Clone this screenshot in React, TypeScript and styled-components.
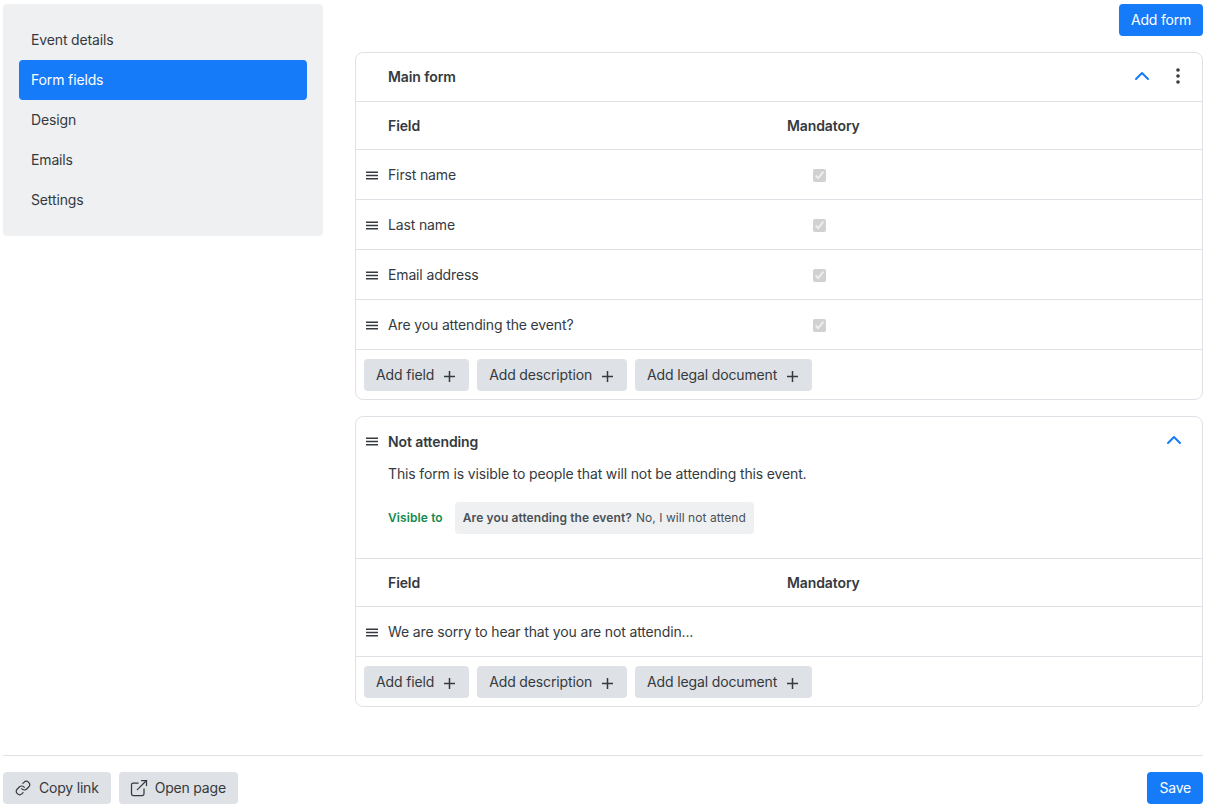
import React from 'react';
import styled, { createGlobalStyle } from 'styled-components';
import { ChevronUp, ExternalLink, Link } from 'lucide-react';

const colors = {
  text: '#343a40',
  muted: '#495057',
  border: '#dee2e6',
  primary: '#167bf9',
  panel: '#eff0f2',
  button: '#dee1e5',
  green: '#148a4f',
};

const GlobalStyle = createGlobalStyle`
  html, body {
    margin: 0;
    background: #fff;
    font-family: Inter, "Liberation Sans", sans-serif;
    font-size: 14px;
    letter-spacing: -0.14px;
    color: ${colors.text};
  }
  * { box-sizing: border-box; }
`;

const Page = styled.div`
  width: 1208px;
  height: 812px;
  padding: 4px 5px 8px 3px;
  display: flex;
  flex-direction: column;
`;

const Columns = styled.div`
  display: flex;
  gap: 32px;
  align-items: flex-start;
  height: 751px;
`;

const Sidebar = styled.nav`
  width: 320px;
  padding: 16px;
  background: ${colors.panel};
  border-radius: 4px;
`;

const NavItem = styled.div<{ $active?: boolean }>`
  height: 40px;
  padding: 0 12px 2px;
  display: flex;
  align-items: center;
  border-radius: 4px;
  background: ${p => (p.$active ? colors.primary : 'transparent')};
  color: ${p => (p.$active ? '#fff' : colors.text)};
`;

const Main = styled.main`
  flex: 1;
  display: flex;
  flex-direction: column;
  gap: 16px;
`;

const TopBar = styled.div`
  display: flex;
  justify-content: flex-end;
`;

const Button = styled.button<{ $primary?: boolean }>`
  height: 32px;
  padding: 0 12px 2px;
  display: inline-flex;
  align-items: center;
  border: 0;
  border-radius: 4px;
  font: inherit;
  letter-spacing: -0.2px;
  background: ${p => (p.$primary ? colors.primary : colors.button)};
  color: ${p => (p.$primary ? '#fff' : colors.text)};
`;

const AddButton = styled(Button)`
  letter-spacing: -0.14px;
`;

const PlusSvg = styled.svg`
  width: 11px;
  height: 11px;
  margin: 5px 2px 0 10px;
  stroke: ${colors.text};
  stroke-width: 1.5;
`;

const PlusIcon = () => (
  <PlusSvg viewBox="0 0 11 11">
    <path d="M5.5 0v11M0 5.5h11" />
  </PlusSvg>
);

const FooterIcon = styled.span<{ $wide?: boolean }>`
  display: inline-flex;
  margin: 2px ${p => (p.$wide ? '6px' : '8px')} 0 ${p => (p.$wide ? '-2px' : '0')};
`;

const Card = styled.section`
  border: 1px solid ${colors.border};
  border-radius: 8px;
`;

const CardHeader = styled.div`
  height: 49px;
  display: flex;
  align-items: center;
  padding: 0 14px 2px 32px;
  border-bottom: 1px solid ${colors.border};
  font-weight: 600;
  letter-spacing: -0.1px;
`;

const HeaderActions = styled.div`
  margin-left: auto;
  display: flex;
  align-items: center;
  gap: 22px;
  color: ${colors.primary};
`;

const DotsSvg = styled.svg`
  width: 4px;
  height: 16px;
  margin-right: 8px;
  fill: ${colors.text};
`;

const DotsIcon = () => (
  <DotsSvg viewBox="0 0 4 16">
    <circle cx="2" cy="2" r="1.8" />
    <circle cx="2" cy="8" r="1.8" />
    <circle cx="2" cy="14" r="1.8" />
  </DotsSvg>
);

const Row = styled.div<{ $head?: boolean }>`
  height: ${p => (p.$head ? '48px' : '50px')};
  display: grid;
  grid-template-columns: 32px 399px 1fr;
  align-items: center;
  border-bottom: 1px solid ${colors.border};
  font-weight: ${p => (p.$head ? 600 : 400)};
  letter-spacing: ${p => (p.$head ? '-0.1px' : '-0.14px')};
`;

const HandleSvg = styled.svg`
  width: 12px;
  height: 9px;
  margin: 1px 0 0 10px;
  fill: ${colors.text};
`;

const Handle = () => (
  <HandleSvg viewBox="0 0 12 9">
    <rect y="0.5" width="12" height="1.5" />
    <rect y="3.75" width="12" height="1.5" />
    <rect y="7" width="12" height="1.5" />
  </HandleSvg>
);

const CheckBox = styled.input.attrs({ type: 'checkbox', disabled: true, defaultChecked: true })`
  width: 13px;
  height: 13px;
  margin: 2px 0 0 26px;
`;

const CardFooter = styled.div`
  height: 49px;
  padding: 9px 8px 8px;
  display: flex;
  gap: 8px;
`;

const FormIntro = styled.div`
  height: 142px;
  padding-right: 16px;
  border-bottom: 1px solid ${colors.border};
`;

const IntroTitle = styled.div`
  height: 48px;
  display: flex;
  align-items: center;
  font-weight: 600;
  letter-spacing: -0.1px;
  gap: 10px;
`;

const Chevron = styled(ChevronUp)`
  color: ${colors.primary};
`;

const IntroChevron = styled(Chevron)`
  margin-left: auto;
  margin-top: -2px;
`;

const IntroBody = styled.div`
  padding-left: 32px;
`;

const VisibleRow = styled.div`
  margin-top: 20px;
  display: flex;
  align-items: center;
  gap: 12px;
  font-size: 12px;
  letter-spacing: 0.06px;
`;

const VisibleLabel = styled.span`
  color: ${colors.green};
  font-weight: 600;
  letter-spacing: 0.1px;
  padding-bottom: 2px;
`;

const Chip = styled.div`
  height: 32px;
  padding: 0 8px 2px;
  display: flex;
  align-items: center;
  gap: 4px;
  border-radius: 4px;
  background: ${colors.panel};
  color: ${colors.muted};

  b {
    font-weight: 600;
    letter-spacing: 0.1px;
  }
`;

const BottomBar = styled.footer`
  border-top: 1px solid ${colors.border};
  padding-top: 16px;
  display: flex;
  gap: 8px;
  width: 1200px;
`;

const SaveButton = styled(Button)`
  margin-left: auto;
`;

const navItems = ['Event details', 'Form fields', 'Design', 'Emails', 'Settings'];
const mainFields = ['First name', 'Last name', 'Email address', 'Are you attending the event?'];

const AddButtons = () => (
  <CardFooter>
    {['Add field', 'Add description', 'Add legal document'].map(label => (
      <AddButton key={label}>
        {label}
        <PlusIcon />
      </AddButton>
    ))}
  </CardFooter>
);

const HeadRow = () => (
  <Row $head>
    <span />
    <span>Field</span>
    <span>Mandatory</span>
  </Row>
);

export default function App() {
  return (
    <Page>
      <GlobalStyle />
      <Columns>
        <Sidebar>
          {navItems.map(item => (
            <NavItem key={item} $active={item === 'Form fields'}>
              {item}
            </NavItem>
          ))}
        </Sidebar>
        <Main>
          <TopBar>
            <Button $primary>Add form</Button>
          </TopBar>
          <Card>
            <CardHeader>
              Main form
              <HeaderActions>
                <Chevron size={24} strokeWidth={2} />
                <DotsIcon />
              </HeaderActions>
            </CardHeader>
            <HeadRow />
            {mainFields.map(field => (
              <Row key={field}>
                <Handle />
                <span>{field}</span>
                <CheckBox />
              </Row>
            ))}
            <AddButtons />
          </Card>
          <Card>
            <FormIntro>
              <IntroTitle>
                <Handle />
                Not attending
                <IntroChevron size={24} strokeWidth={2} />
              </IntroTitle>
              <IntroBody>
                This form is visible to people that will not be attending this event.
                <VisibleRow>
                  <VisibleLabel>Visible to</VisibleLabel>
                  <Chip>
                    <b>Are you attending the event?</b> No, I will not attend
                  </Chip>
                </VisibleRow>
              </IntroBody>
            </FormIntro>
            <HeadRow />
            <Row>
              <Handle />
              <span>We are sorry to hear that you are not attendin...</span>
            </Row>
            <AddButtons />
          </Card>
        </Main>
      </Columns>
      <BottomBar>
        <Button>
          <FooterIcon>
            <Link size={16} strokeWidth={1.75} />
          </FooterIcon>
          Copy link
        </Button>
        <Button>
          <FooterIcon $wide>
            <ExternalLink size={20} strokeWidth={1.5} />
          </FooterIcon>
          Open page
        </Button>
        <SaveButton $primary>Save</SaveButton>
      </BottomBar>
    </Page>
  );
}
